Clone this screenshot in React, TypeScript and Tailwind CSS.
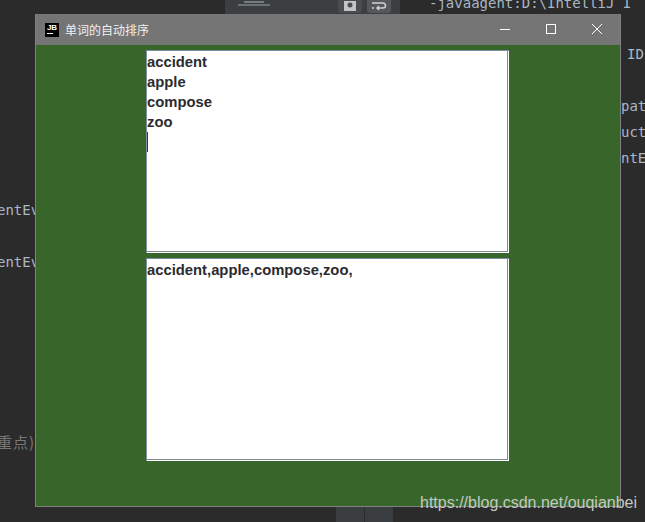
import React from 'react';

const TextBox = ({ children }: { children: React.ReactNode }) => (
  <div className="w-[363px] h-[203px] bg-white border-t border-l border-[#7f8fa3] shadow-[inset_-1px_-1px_0_#fff,inset_-2px_-2px_0_#808890] font-['Liberation_Sans',sans-serif] font-bold text-[14.8px] leading-[20px] text-[#2b2b2f] pt-[1px]">
    {children}
  </div>
);

const codeText = "font-['DejaVu_Sans_Mono',monospace] text-[14px] leading-[26px] text-[#a9b7c6] whitespace-nowrap";

const Toolbar = () => (
  <div className="absolute left-[225px] top-0 w-[175px] h-[14px] bg-[#3c3f41] flex items-start">
    <div className="ml-[5px] mt-[1px] w-[100px] flex flex-col gap-[1px]">
      <div className="ml-[14px] w-[20px] h-[2px] bg-[#77797b]" />
      <div className="ml-[8px] w-[32px] h-[2px] bg-[#6a7276]" />
    </div>
    <div className="ml-[8px] w-[24px] h-[13px] rounded-b-[3px] bg-[#4a4d4f] flex items-center justify-center">
      <svg width="14" height="12" viewBox="0 0 14 12"><path d="M1 0h12v10H1z" fill="#c4c4c4" /><circle cx="7" cy="4" r="2.5" fill="#4a4d4f" /></svg>
    </div>
    <div className="ml-[5px] w-[24px] h-[13px] rounded-b-[3px] bg-[#55585a] flex items-center justify-center">
      <svg width="16" height="12" viewBox="0 0 16 12" fill="none" stroke="#d0d0d0" strokeWidth="1.5"><path d="M1 2h11a2 2 0 0 1 0 5H6M8 5L6 7l2 2" /><path d="M1 7h2" /></svg>
    </div>
  </div>
);

const Desktop = () => (
  <>
    <Toolbar />
    <div className={`absolute left-[429px] -top-[10px] text-[14.5px] ${codeText}`}>-javaagent:D:\IntelliJ I</div>
    <div className={`absolute right-0 top-[41px] w-[24px] flex flex-col overflow-hidden ${codeText}`}>
      <span className="pl-[6px]">ID</span>
      <span className="mt-[26px]">pat</span>
      <span>uct</span>
      <span>ntE</span>
    </div>
    <div className={`absolute left-0 top-[197px] w-[35px] h-[260px] flex flex-col overflow-hidden ${codeText}`}>
      <span className="-ml-[3px]">entEv</span>
      <span className="-ml-[3px] mt-[26px]">entEv</span>
      <span className="-ml-[3px] mt-[154px] font-['Noto_Sans_CJK_SC',sans-serif] text-[15px] tracking-[1px] text-[#787878]">重点)</span>
    </div>
    <div className="absolute left-[336px] bottom-0 flex gap-[1px]">
      <div className="w-[28px] h-[15px] bg-[#3a3d3f]" />
      <div className="w-[28px] h-[15px] bg-[#3a3d3f]" />
    </div>
  </>
);

export default function App() {
  return (
    <div className="relative w-[645px] h-[522px] overflow-hidden bg-[#2b2b2b]">
      <Desktop />
      <div className="absolute left-[35px] top-[14px] w-[586px] h-[493px] flex flex-col border-x border-b border-[#808080]">
        <div className="h-[31px] shrink-0 flex items-center bg-[#757575] text-white">
          <div className="ml-[9px] w-[14px] h-[14px] bg-black text-white text-[8px] leading-[9px] font-bold font-['Liberation_Sans',sans-serif] flex flex-col items-center">
            <span>JB</span>
            <span className="self-start ml-[2px] mt-[1px] w-[6px] h-px bg-white" />
          </div>
          <span className="ml-[6px] font-['Noto_Sans_CJK_SC',sans-serif] text-[12px] text-[#f0f0f0]">单词的自动排序</span>
          <div className="ml-auto flex items-center">
            <svg width="46" height="31" viewBox="0 0 46 31"><path d="M18 15.5h10" stroke="#fff" /></svg>
            <svg width="46" height="31" viewBox="0 0 46 31"><rect x="18.5" y="10.5" width="9" height="9" fill="none" stroke="#fff" /></svg>
            <svg width="46" height="31" viewBox="0 0 46 31"><path d="M18 10l10 10M28 10L18 20" stroke="#fff" /></svg>
          </div>
        </div>
        <div className="flex-1 bg-[#38662a] pt-[5px] pl-[110px] flex flex-col gap-[5px]">
          <TextBox>
            <div>accident</div>
            <div>apple</div>
            <div>compose</div>
            <div>zoo</div>
            <div className="w-px h-[20px] bg-[#2b3a55]" />
          </TextBox>
          <TextBox>accident,apple,compose,zoo,</TextBox>
        </div>
      </div>
      <div className="absolute left-[420px] top-[493px] font-['Liberation_Sans',sans-serif] text-[16px] leading-[20px] text-[#c4c8c2] whitespace-nowrap">https://blog.csdn.net/ouqianbei</div>
    </div>
  );
}
